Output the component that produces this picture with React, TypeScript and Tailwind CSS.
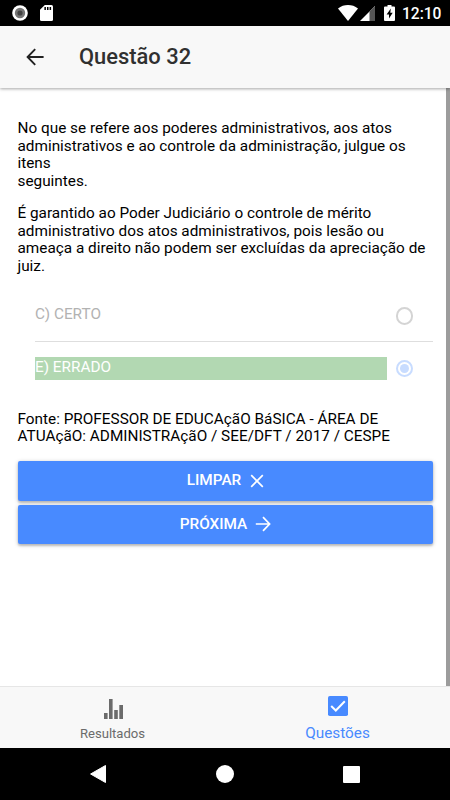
import React from 'react';

const statement = [
    'No que se refere aos poderes administrativos, aos atos',
    'administrativos e ao controle da administração, julgue os',
    'itens',
    'seguintes.',
];

const assertion = [
    'É garantido ao Poder Judiciário o controle de mérito',
    'administrativo dos atos administrativos, pois lesão ou',
    'ameaça a direito não podem ser excluídas da apreciação de',
    'juiz.',
];

const source = [
    'Fonte: PROFESSOR DE EDUCAçãO BáSICA - ÁREA DE',
    'ATUAçãO: ADMINISTRAçãO / SEE/DFT / 2017 / CESPE',
];

const Lines: React.FC<{ lines: string[] }> = ({ lines }) => (
    <p className="text-[15.33px] leading-[17.5px] whitespace-nowrap text-black">
        {lines.map((line) => (
            <span key={line} className="block">{line}</span>
        ))}
    </p>
);

const StatusBar: React.FC = () => (
    <div className="flex h-[26px] shrink-0 items-center bg-black text-white">
        <svg className="ml-3 h-4 w-4" viewBox="0 0 16 16">
            <circle cx="8" cy="8" r="7.8" fill="#fff" />
            <circle cx="8" cy="8" r="5.2" fill="#757575" />
            <circle cx="8" cy="8" r="2.6" fill="#424242" />
        </svg>
        <svg className="ml-3 h-4 w-[13px]" viewBox="0 0 13 16">
            <path d="M4.8 0H11.5Q13 0 13 1.5V14.5Q13 16 11.5 16H1.5Q0 16 0 14.5V4.8Z" fill="#fff" />
            <path d="M4.4 2h1.5v3H4.4zM7 2h1.5v3H7zM9.6 2h1.5v3H9.6z" fill="#000" />
        </svg>
        <div className="ml-auto flex items-center">
            <svg className="h-4 w-5" viewBox="0 0 20 16">
                <path d="M0 3.4Q4.5 0 10 0T20 3.4L10 16Z" fill="#fff" />
            </svg>
            <svg className="ml-0.5 h-[15px] w-[15px]" viewBox="0 0 15 15">
                <path d="M15 0V15H0Z" fill="#fff" />
                <path d="M15 0V15H9.5V5.5Z" fill="#555" />
            </svg>
            <svg className="ml-[9px] h-4 w-[11px]" viewBox="0 0 11 16">
                <path d="M3.5 0h4v1.6H10q1 0 1 1V15q0 1-1 1H1q-1 0-1-1V2.6q0-1 1-1h2.5z" fill="#fff" />
                <path d="M6.8 3.4 2.6 9.6H5v4L8.7 7.7H6.3z" fill="#000" />
            </svg>
            <span className="mt-0.5 mr-[8.5px] ml-[7px] text-[15.6px] leading-4 font-medium">12:10</span>
        </div>
    </div>
);

const Header: React.FC = () => (
    <header className="z-10 flex h-[61.5px] shrink-0 items-center bg-[#f8f8f8] shadow-[0_1px_3px_rgba(0,0,0,0.35)]">
        <svg className="ml-[26px] h-[18px] w-[18px]" viewBox="0 0 18 18" fill="none" stroke="#222" strokeWidth="1.9">
            <path d="M9.2 1.2 1.6 9l7.6 7.8M1.6 9H17.6" />
        </svg>
        <h1 className="mt-px ml-[35px] text-[21.9px] leading-6 font-medium text-[#303030]">Questão 32</h1>
    </header>
);

const Options: React.FC = () => (
    <div className="ml-[17.5px] text-[15.33px] leading-[17.5px]">
        <div className="flex h-[52px] items-center border-b border-[#dedede]">
            <span className="grow pb-0.5 text-[#b2b2b2]">C) CERTO</span>
            <span className="mt-px mr-5 h-[17.5px] w-[17.5px] rounded-full border-2 border-[#d4d4d4]" />
        </div>
        <div className="flex h-[53px] items-center">
            <span className="h-[22.5px] w-[352px] bg-[#b2d8b2] pt-[1.5px] text-white">E) ERRADO</span>
            <span className="mr-5 ml-auto flex h-[17.5px] w-[17.5px] items-center justify-center rounded-full border-2 border-[#c8dcff]">
                <span className="h-[9px] w-[9px] rounded-full bg-[#c8dcff]" />
            </span>
        </div>
    </div>
);

const ActionButton: React.FC<{ label: string; children: React.ReactNode }> = ({ label, children }) => (
    <button className="flex h-[39.5px] w-full items-center justify-center rounded-[2px] bg-[#488aff] text-[15.33px] font-medium text-white shadow-[0_2px_2px_rgba(0,0,0,0.14),0_1px_4px_rgba(0,0,0,0.25)]">
        {label}
        {children}
    </button>
);

const Tabs: React.FC = () => (
    <nav className="flex h-[62px] shrink-0 border-t border-[#e6e6e6] bg-[#f8f8f8]">
        <div className="flex flex-1 flex-col items-center pt-3 text-[#6b6b6b]">
            <svg className="ml-px h-5 w-[19px]" viewBox="0 0 19 20" fill="currentColor">
                <path d="M0 14h3.6v6H0zM5 0h3.6v20H5zM10.2 11h3.6v9h-3.6zM15.3 6h3.7v14h-3.7z" />
            </svg>
            <span className="mt-[7px] text-[13.1px] leading-4">Resultados</span>
        </div>
        <div className="flex flex-1 flex-col items-center pt-[9px] text-[#488aff]">
            <svg className="h-5 w-5" viewBox="0 0 20 20">
                <rect width="20" height="20" rx="1.8" fill="currentColor" />
                <path d="m3.2 10 4.6 4.5L16.8 5.3" fill="none" stroke="#fff" strokeWidth="2" />
            </svg>
            <span className="mt-[9px] text-[15.33px] leading-4">Questões</span>
        </div>
    </nav>
);

const AndroidNav: React.FC = () => (
    <div className="flex h-[52px] shrink-0 items-center bg-black">
        <svg className="ml-[90px] h-[18px] w-4" viewBox="0 0 16 18">
            <path d="M.6 9 15.5.5v17z" fill="#fff" stroke="#fff" strokeLinejoin="round" />
        </svg>
        <span className="ml-[110px] h-[18px] w-[18px] rounded-full bg-white" />
        <span className="ml-[109px] h-[17px] w-[17px] rounded-[1px] bg-white" />
    </div>
);

const App: React.FC = () => {
    return (
        <div className="flex h-[800px] w-[450px] flex-col overflow-hidden bg-white font-[Roboto,sans-serif]">
            <StatusBar />
            <Header />
            <main className="flex min-h-0 flex-1">
                <div className="w-[433px] pt-[32.5px] pl-[17.5px]">
                    <Lines lines={statement} />
                    <div className="h-[15px]" />
                    <Lines lines={assertion} />
                    <div className="h-[15px]" />
                    <Options />
                    <div className="h-[15.5px]" />
                    <Lines lines={source} />
                    <div className="mt-[15.5px] flex flex-col gap-1">
                        <ActionButton label="LIMPAR">
                            <svg className="ml-[8.5px] h-[14px] w-[14px]" viewBox="0 0 14 14" fill="none" stroke="#fff" strokeWidth="1.7">
                                <path d="m1.2 1.2 11.6 11.6M12.8 1.2 1.2 12.8" />
                            </svg>
                        </ActionButton>
                        <ActionButton label="PRÓXIMA">
                            <svg className="ml-[7.5px] h-4 w-4" viewBox="0 0 16 16" fill="none" stroke="#fff" strokeWidth="1.7">
                                <path d="M8 1.2 14.6 8 8 14.8M14.6 8H.8" />
                            </svg>
                        </ActionButton>
                    </div>
                </div>
                <div className="ml-auto w-1 bg-[#9c9c9c]" />
            </main>
            <Tabs />
            <AndroidNav />
        </div>
    );
};

export default App;
